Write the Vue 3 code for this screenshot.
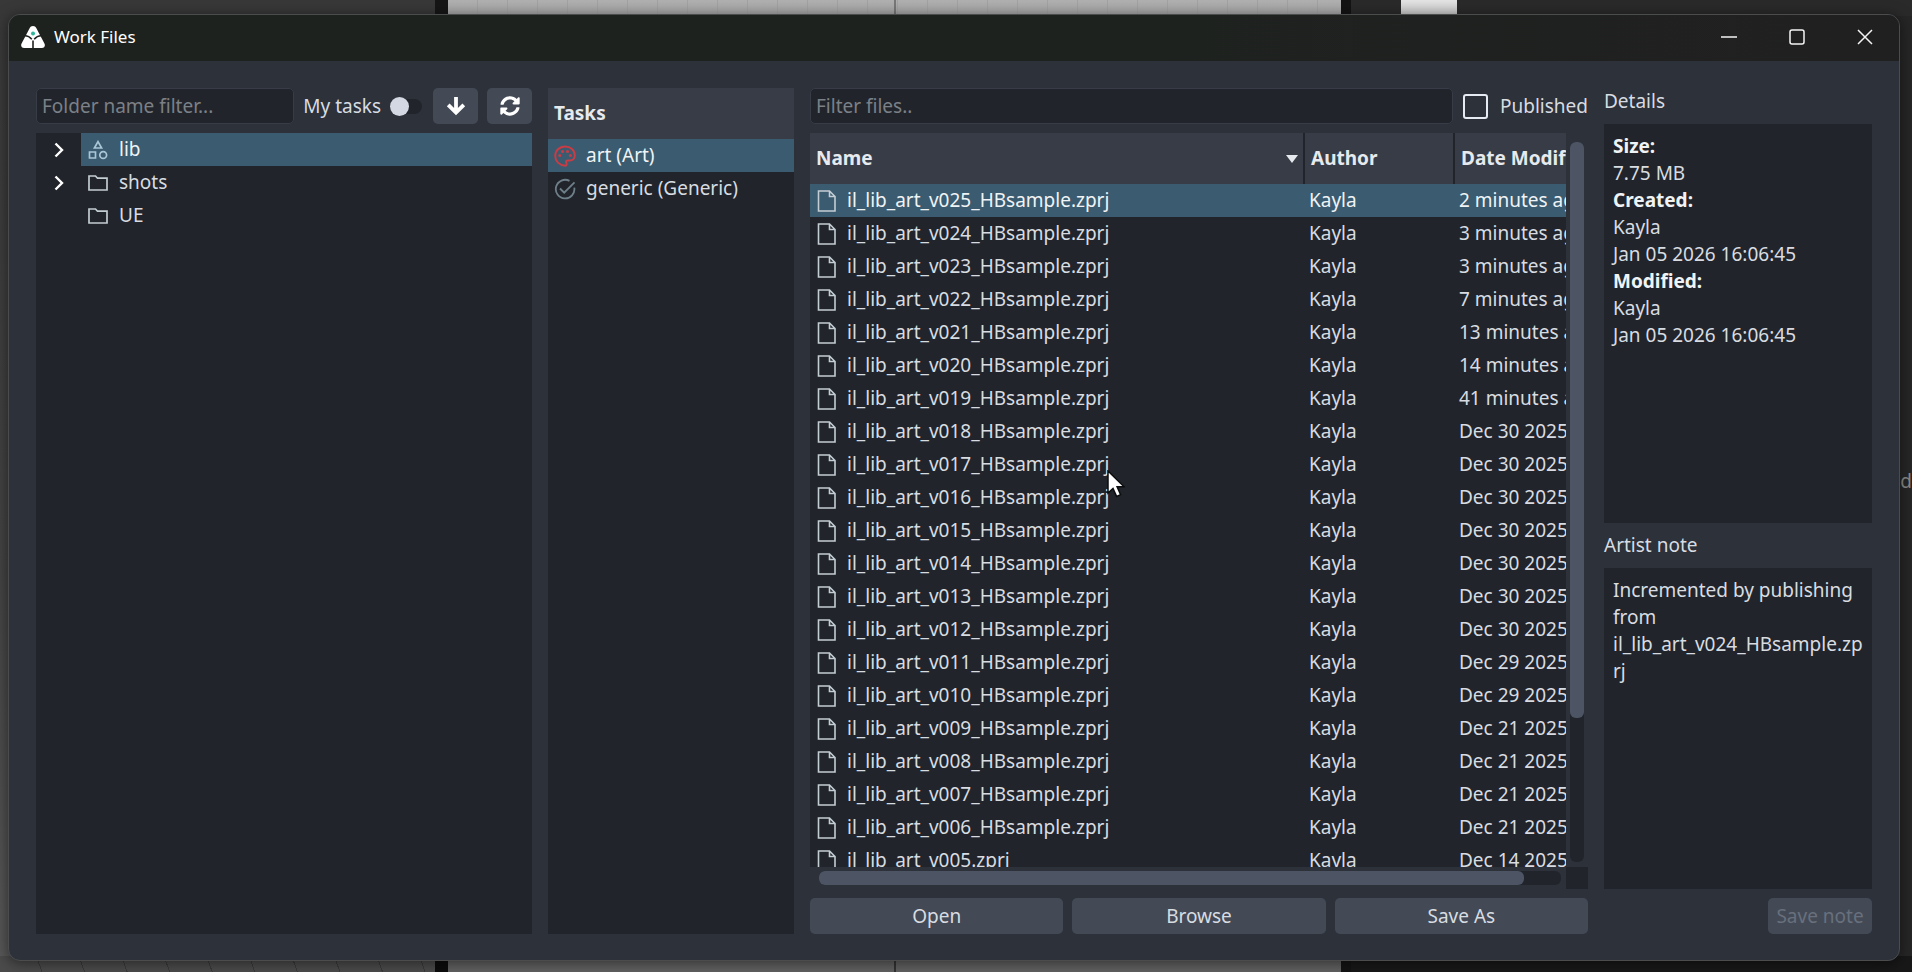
<script setup>
import { ref } from 'vue'

const folderFilter = ref('')
const fileFilter = ref('')
const myTasks = ref(false)
const published = ref(false)
const note = ref('Incremented by publishing from il_lib_art_v024_HBsample.zprj')

const folders = [
  { name: 'lib', icon: 'shapes', expandable: true, selected: true },
  { name: 'shots', icon: 'folder', expandable: true, selected: false },
  { name: 'UE', icon: 'folder', expandable: false, selected: false },
]

const dates = [
  '2 minutes ago', '3 minutes ago', '3 minutes ago', '7 minutes ago',
  '13 minutes ago', '14 minutes ago', '41 minutes ago',
  'Dec 30 2025', 'Dec 30 2025', 'Dec 30 2025', 'Dec 30 2025',
  'Dec 30 2025', 'Dec 30 2025', 'Dec 30 2025',
  'Dec 29 2025', 'Dec 29 2025',
  'Dec 21 2025', 'Dec 21 2025', 'Dec 21 2025', 'Dec 21 2025',
  'Dec 14 2025',
]
const files = dates.map((date, i) => {
  const version = String(25 - i).padStart(3, '0')
  return {
    name: `il_lib_art_v${version}${i < 20 ? '_HBsample' : ''}.zprj`,
    author: 'Kayla',
    date,
  }
})
</script>

<template>
  <div class="desktop">
    <div class="strip strip-top" aria-hidden="true">
      <span class="s-left"></span><span class="s-gap"></span><span class="s-canvas"><i></i></span><span class="s-gap2"></span><span class="s-right"><b></b></span>
    </div>
    <div class="strip strip-bottom" aria-hidden="true">
      <span class="s-left"></span><span class="s-gap"></span><span class="s-canvas"><i></i></span><span class="s-gap2"></span><span class="s-right"></span>
    </div>
    <div class="edge-text" aria-hidden="true">d</div>

    <main class="window">
      <header class="titlebar">
        <svg class="logo" viewBox="0 0 24 22" width="24" height="22">
          <path fill="#fff" d="M12 0c1.600 0 2.600.8 3.400 2.300l2.600 5 5.300 10c1.300 2.500.3 4.700-2.500 4.700H3.200c-2.800 0-3.800-2.200-2.500-4.700l5.300-10 2.600-5C9.400.8 10.400 0 12 0z" />
          <path fill="none" stroke="#1e221f" stroke-width="1.500" d="M3.500 9.500c2.800.3 5.600 1.600 7.300 3.700M20.500 9.500c-2.800.3-5.600 1.600-7.300 3.700" />
          <path fill="none" stroke="#1e221f" stroke-width="1.600" d="M12 14.500V22" />
          <circle cx="12" cy="7.500" r="2" fill="#2fb59a" />
        </svg>
        <h1>Work Files</h1>
        <div class="controls">
          <button type="button" aria-label="Minimize"><svg viewBox="0 0 16 16" width="16" height="16"><path d="M0 8h16" /></svg></button>
          <button type="button" aria-label="Maximize"><svg viewBox="0 0 16 16" width="16" height="16"><rect x="1" y="1" width="14" height="14" rx="2" /></svg></button>
          <button type="button" aria-label="Close"><svg viewBox="0 0 16 16" width="16" height="16"><path d="M1 1l14 14M15 1L1 15" /></svg></button>
        </div>
      </header>

      <div class="body">
        <section class="folders">
          <div class="toolbar">
            <input v-model="folderFilter" class="field" type="text" placeholder="Folder name filter..." aria-label="Folder name filter" />
            <label class="toggle">My tasks<input v-model="myTasks" type="checkbox" /></label>
            <button type="button" class="btn icon-btn" aria-label="Go to current folder">
              <svg viewBox="0 0 20 20" width="20" height="20"><path fill="none" stroke="#fff" stroke-width="3.800" d="M10 1v14M2.200 8.800L10 16.600l7.800-7.800" /></svg>
            </button>
            <button type="button" class="btn icon-btn" aria-label="Refresh">
              <svg viewBox="0 0 512 512" width="20" height="20"><path fill="#fff" d="M370.700 133.300C339.500 104 298.900 88 255.800 88c-77.500.1-144.300 53.200-162.800 126.900-1.300 5.400-6.100 9.100-11.700 9.100H24.100c-7.500 0-13.200-6.800-11.800-14.200C33.900 94.900 134.800 8 256 8c66.400 0 126.800 26.100 171.300 68.700L463 41c15.100-15.100 41-4.400 41 17v134c0 13.300-10.700 24-24 24H346c-21.400 0-32.100-25.900-17-41l41.700-41.700zM32 296h134c21.400 0 32.100 25.900 17 41l-41.800 41.800C172.500 408 213.100 424 256.200 424c77.400-.1 144.300-53.200 162.800-126.900 1.300-5.400 6.100-9.100 11.700-9.100h57.300c7.500 0 13.200 6.800 11.800 14.200C478.100 417.100 377.200 504 256 504c-66.400 0-126.800-26.100-171.300-68.700L49 471c-15.100 15.100-41 4.400-41-17V320c0-13.300 10.700-24 24-24z" /></svg>
            </button>
          </div>
          <ul class="tree">
            <li v-for="f in folders" :key="f.name" :class="{ selected: f.selected }">
              <span class="branch">
                <svg v-if="f.expandable" viewBox="0 0 10 16" width="10" height="16"><path fill="none" stroke="#fff" stroke-width="2.400" d="M1.500 1.500L8 8l-6.500 6.500" /></svg>
              </span>
              <span class="node">
                <svg v-if="f.icon === 'shapes'" class="line-icon" viewBox="0 0 20 20" width="20" height="20"><path d="M10 1.600L13.600 8H6.400zM1.500 12h6v6h-6z" /><circle cx="15.200" cy="15" r="3.400" /></svg>
                <svg v-else class="line-icon" viewBox="0 0 20 20" width="20" height="20"><path d="M1 3h6.500l2 2.200H19V17H1z" /></svg>
                {{ f.name }}
              </span>
            </li>
          </ul>
        </section>

        <section class="tasks">
          <h2 class="head">Tasks</h2>
          <ul>
            <li class="selected">
              <svg viewBox="0 0 22 22" width="22" height="22"><g fill="none" stroke="#c73c45" stroke-width="2"><path d="M11.500 20.800C5 20.300 1.200 16.200 1.200 11S5.500 1.500 11 1.500s9.800 3.900 9.800 8.900c0 3-2 5-4.800 5h-2.200c-1.600 0-2.200 1.200-1.500 2.400.7 1.300.3 3-.8 3z" /></g><g fill="#c73c45"><circle cx="5.800" cy="10.600" r="1.500" /><circle cx="8.500" cy="6.600" r="1.500" /><circle cx="13.500" cy="6.600" r="1.500" /><circle cx="16.400" cy="10.600" r="1.500" /></g></svg>
              art (Art)
            </li>
            <li>
              <svg viewBox="0 0 22 22" width="22" height="22"><g fill="none" stroke="#6f7f8a" stroke-width="1.800"><path d="M20.300 9.600A9.300 9.300 0 1 1 15.500 2.900" /><path d="M6 10.500l4.200 4.200L20.500 4.300" /></g></svg>
              generic (Generic)
            </li>
          </ul>
        </section>

        <section class="files">
          <div class="toolbar">
            <input v-model="fileFilter" class="field" type="text" placeholder="Filter files.." aria-label="Filter files" />
            <label class="check"><input v-model="published" type="checkbox" />Published</label>
          </div>
          <div class="view">
            <div class="clip">
              <table>
                <colgroup><col class="c-name" /><col class="c-author" /><col class="c-date" /></colgroup>
                <thead>
                  <tr>
                    <th scope="col"><span class="sort">Name<svg viewBox="0 0 12 8" width="12" height="8"><path fill="#e6eaee" d="M0 0h12L6 8z" /></svg></span></th>
                    <th scope="col">Author</th>
                    <th scope="col">Date Modified</th>
                  </tr>
                </thead>
                <tbody>
                  <tr v-for="(f, i) in files" :key="f.name" :class="{ selected: i === 0 }">
                    <td><span class="file"><svg viewBox="0 0 20 22" width="20" height="22"><path fill="none" stroke="#c3cdd4" stroke-width="1.600" d="M1.500 1h11L18 6.500V21H1.500zM12.500 1v5.500H18" /></svg>{{ f.name }}</span></td>
                    <td>{{ f.author }}</td>
                    <td>{{ f.date }}</td>
                  </tr>
                </tbody>
              </table>
            </div>
            <div class="vbar"><div class="track"><div class="thumb"></div></div></div>
            <div class="hbar"><div class="track"><div class="thumb"></div></div></div>
            <div class="corner"></div>
          </div>
          <div class="actions">
            <button type="button" class="btn">Open</button>
            <button type="button" class="btn">Browse</button>
            <button type="button" class="btn">Save As</button>
          </div>
        </section>

        <aside class="details">
          <h2>Details</h2>
          <dl class="info">
            <dt>Size:</dt><dd>7.75 MB</dd>
            <dt>Created:</dt><dd>Kayla</dd><dd>Jan 05 2026 16:06:45</dd>
            <dt>Modified:</dt><dd>Kayla</dd><dd>Jan 05 2026 16:06:45</dd>
          </dl>
          <label class="note-label" for="note">Artist note</label>
          <textarea id="note" v-model="note" spellcheck="false"></textarea>
          <button type="button" class="btn save" disabled>Save note</button>
        </aside>
      </div>
    </main>

    <svg class="pointer" viewBox="0 0 18 28" width="18" height="28" aria-hidden="true"><path fill="#fff" stroke="#0b0c0e" stroke-width="1.500" d="M1 1v22l5-4.600 3.600 8 4-1.800-3.500-7.800h7z" /></svg>
  </div>
</template>

<style>
body { background: #262626; }
</style>

<style scoped>
* { box-sizing: border-box; }
.desktop {
  position: relative;
  height: 100vh;
  padding: 14px 12px 11px 8px;
  overflow: hidden;
  background: linear-gradient(90deg, transparent 50%, #262626 50%), linear-gradient(#383838, #444 60%, #585858);
  font-family: "Noto Sans", "Open Sans", sans-serif;
  font-size: 19px;
  line-height: 27px;
  color: #d8dce1;
}
h1, h2, ul, dl, dd { margin: 0; padding: 0; }
ul { list-style: none; }
button, input, textarea { font: inherit; color: inherit; }

.strip { position: absolute; left: 0; right: 0; height: 16px; display: flex; }
.strip-top { top: 0; }
.strip-bottom { bottom: 0; }
.s-left { width: 435px; background: #383838; }
.s-gap { width: 13px; background: #161616; }
.s-canvas { width: 893px; display: flex; justify-content: center; background: repeating-linear-gradient(90deg, transparent 0 29px, #a2a2a2 29px 30px), linear-gradient(#b0b0b0, #a4a4a4); }
.s-canvas i { width: 2px; background: #777; }
.s-gap2 { width: 10px; background: #141414; }
.s-right { flex: 1; background: #2a2a2a; }
.s-right b { display: block; width: 56px; height: 16px; margin-left: 50px; background: linear-gradient(#e4e4e4, #c4c4c4); }
.strip-bottom .s-left { background: repeating-linear-gradient(70deg, transparent 0 39px, #3a3a3a 39px 40px), #4b4b4b; }
.strip-bottom .s-gap { background: #0c0c0c; }
.strip-bottom .s-canvas { background: #616161; }
.strip-bottom .s-canvas i { background: #333; }
.strip-bottom .s-right { background: #181818; }
.edge-text { position: absolute; right: 0; top: 468px; color: #8a8a8a; line-height: 27px; }

.window {
  position: relative;
  height: 100%;
  display: flex;
  flex-direction: column;
  border: 1px solid #4a4c4e;
  border-radius: 12px;
  overflow: hidden;
  background: #2c313a;
  box-shadow: 0 2px 14px rgba(0, 0, 0, .5);
}
.titlebar {
  display: flex;
  align-items: center;
  flex: 0 0 46px;
  padding: 0 0 3px 12px;
  background: linear-gradient(90deg, #1e221f, #1e221f 60%, #202020);
}
.titlebar h1 { margin-left: 9px; font-size: 17px; font-weight: 400; color: #fff; }
.controls { margin-left: auto; display: flex; }
.controls button { width: 68px; height: 43px; padding: 0; border: 0; background: none; display: grid; place-items: center; }
.controls svg { fill: none; stroke: #f4f4f4; stroke-width: 1.500; }

.body {
  flex: 1;
  min-height: 0;
  display: grid;
  grid-template-columns: minmax(0, 496fr) minmax(0, 246fr) minmax(0, 778fr) minmax(0, 268fr);
  column-gap: 16px;
  padding: 27px 27px 26px 27px;
}
.body > * { min-height: 0; display: flex; flex-direction: column; }
.toolbar { display: flex; align-items: center; height: 36px; margin-bottom: 9px; flex: none; }
.field {
  flex: 1;
  min-width: 0;
  height: 36px;
  padding: 0 5px;
  border: 1px solid #373c46;
  border-radius: 5px;
  background: #21252b;
  outline: 0;
}
.field::placeholder { color: #7c8087; opacity: 1; }
.btn { height: 36px; padding: 0; border: 0; border-radius: 5px; background: #434a56; color: #d8dce1; }
.icon-btn { width: 45px; margin-left: 9px; display: grid; place-items: center; }

.toggle { display: flex; align-items: center; gap: 9px; margin: 0 2px 0 9px; }
.toggle input { appearance: none; display: flex; align-items: center; width: 32px; height: 15px; margin: 0; border-radius: 8px; background: #21252b; }
.toggle input::before { content: ""; width: 19px; height: 19px; border-radius: 50%; background: #d3d8e2; flex: none; }

.tree { flex: 1; background: #21252b; }
.tree li { display: flex; height: 33px; line-height: 33px; }
.branch { width: 45px; padding-left: 18px; display: flex; align-items: center; }
.node { flex: 1; display: flex; align-items: center; gap: 11px; padding-left: 7px; }
.line-icon { fill: none; stroke: #c3cdd4; stroke-width: 1.700; }
.selected .node, .tasks .selected, tbody .selected { background: #3a5b70; color: #f0f3f5; }
.selected .line-icon { stroke: #a9c6d6; }

.tasks { background: #21252b; }
.head { height: 51px; padding-left: 6px; font-size: 19px; line-height: 51px; font-weight: 700; background: #373c46; color: #e6eaee; }
.tasks li { display: flex; align-items: center; gap: 10px; height: 33px; padding-left: 6px; }

.check { display: flex; align-items: center; gap: 12px; margin-left: 10px; }
.check input { appearance: none; width: 25px; height: 25px; margin: 0; border: 2px solid #e6eaf2; border-radius: 3px; }
.view { flex: 1; min-height: 0; display: grid; grid-template: minmax(0, 1fr) 22px / minmax(0, 1fr) 22px; }
.clip { overflow: hidden; background: #21252b; }
table { width: 840px; border-collapse: collapse; table-layout: fixed; }
.c-name { width: 494px; }
.c-author { width: 150px; }
th { height: 51px; padding: 0 6px; text-align: left; font-weight: 700; color: #e6eaee; background: #373c46; }
th + th { border-left: 2px solid #21252b; }
th:first-child { padding-right: 5px; }
.sort { display: flex; align-items: center; justify-content: space-between; }
td { height: 33px; padding: 0 5px; white-space: nowrap; }
td:first-child { padding-left: 7px; }
.file { display: flex; align-items: center; gap: 10px; }
.vbar { padding: 9px 4px 5px; }
.vbar .track { height: 100%; border-radius: 6px; background: #21252b; }
.vbar .thumb { height: 80%; border-radius: 6px; background: #4d5464; }
.hbar { padding: 4px 5px 4px 9px; }
.hbar .track { height: 14px; border-radius: 6px; background: #21252b; }
.hbar .thumb { width: 95%; height: 14px; border-radius: 6px; background: #4d5464; }
.corner { background: #21252b; }
.actions { display: grid; grid-template-columns: repeat(3, 1fr); gap: 9px; margin-top: 9px; }

.details h2 { font-size: 19px; font-weight: 400; line-height: 27px; margin-bottom: 9px; }
.info { flex: 401 0 0; padding: 9px; background: #21252b; }
dt { font-weight: 700; color: #f0f3f5; }
.note-label { margin: 9px 0; }
textarea { display: block; flex: 318 0 0; width: 100%; padding: 9px; border: 0; outline: 0; resize: none; background: #21252b; line-height: 27px; overflow-wrap: anywhere; }
.save { align-self: flex-end; width: 104px; margin-top: 9px; }
.save:disabled { color: #68707d; }

.pointer { position: absolute; left: 1107px; top: 470px; }
</style>
